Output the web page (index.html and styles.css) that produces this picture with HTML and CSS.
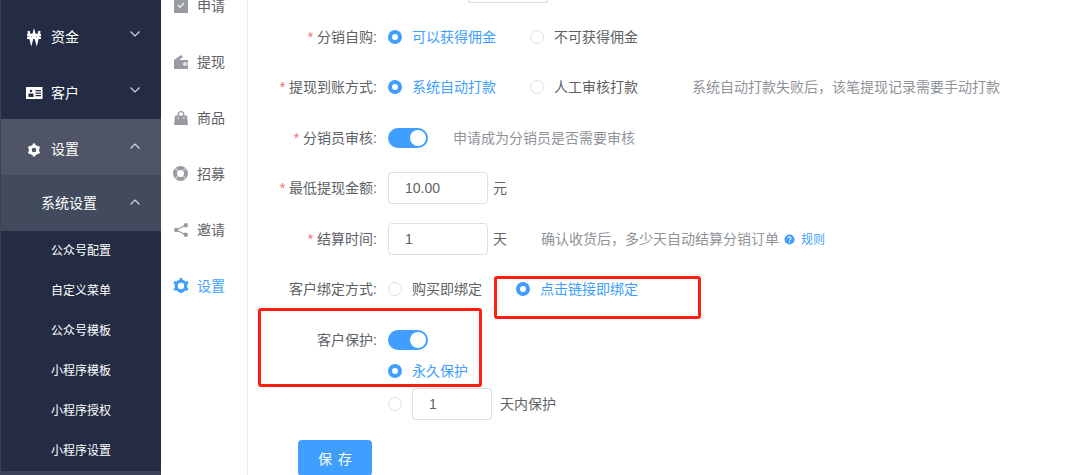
FILE: index.html
```html
<!DOCTYPE html>
<html lang="zh-CN">
<head>
    <meta charset="UTF-8" />
    <title>分销设置</title>
    <link rel="stylesheet" href="styles.css">
</head>
<body>
    <div class="page">
        <!-- Main dark menu -->
        <nav class="sidebar">
            <div class="menu-item">
                <svg class="menu-icon" viewBox="0 0 16 16"><path d="M2.500 3 5.300 14 8 4.500l2.700 9.500L13.500 3M1 6.800h14M1 9.800h14" fill="none" stroke="#fff" stroke-width="2.300"/></svg>
                <span class="menu-text">资金</span>
                <svg class="chevron" viewBox="0 0 10 6"><path d="M.5.5 5 5 9.500.500" fill="none" stroke="#d8dce6" stroke-width="1.100"/></svg>
            </div>
            <div class="menu-item">
                <svg class="menu-icon" viewBox="0 0 16 16"><path fill="#fff" fill-rule="evenodd" d="M0 3h16.500v12H0zM2.500 9.500V13h5V9.500zM3.700 7a1.300 1.300 0 1 0 2.600 0 1.300 1.300 0 1 0-2.600 0zM9.500 6v1.200H15V6zM9.500 8.500v1.200H15V8.500zM9.500 11v1.200H15V11z"/></svg>
                <span class="menu-text">客户</span>
                <svg class="chevron" viewBox="0 0 10 6"><path d="M.5.5 5 5 9.500.500" fill="none" stroke="#d8dce6" stroke-width="1.100"/></svg>
            </div>
            <div class="menu-item menu-open">
                <svg class="menu-icon" viewBox="0 0 16 16"><circle cx="8" cy="10" r="3.800" fill="none" stroke="#fff" stroke-width="3"/><path d="M8 3.600v12.800M2.500 6.800l11 6.400M13.500 6.800l-11 6.400" stroke="#fff" stroke-width="2.600" stroke-dasharray="2 8.800 2"/></svg>
                <span class="menu-text">设置</span>
                <svg class="chevron" viewBox="0 0 10 6"><path d="M.5 5.500 5 1l4.500 4.500" fill="none" stroke="#d8dce6" stroke-width="1.100"/></svg>
            </div>
            <div class="menu-item menu-sub">
                <span class="menu-text">系统设置</span>
                <svg class="chevron" viewBox="0 0 10 6"><path d="M.5 5.500 5 1l4.500 4.500" fill="none" stroke="#d8dce6" stroke-width="1.100"/></svg>
            </div>
            <div class="leaf">公众号配置</div>
            <div class="leaf">自定义菜单</div>
            <div class="leaf">公众号模板</div>
            <div class="leaf">小程序模板</div>
            <div class="leaf">小程序授权</div>
            <div class="leaf">小程序设置</div>
            <div class="leaf leaf-hover"></div>
        </nav>

        <!-- Second level menu -->
        <aside class="submenu">
            <div class="sub-item">
                <svg class="sub-icon" viewBox="0 0 16 16"><path fill="#999ba3" fill-rule="evenodd" d="M1 1h3V0h8v1h3v15H1zM4.500 8.500 7 11l4.500-4.500-.800-.800L7 9.400 5.300 7.700z"/></svg>
                <span>申请</span>
            </div>
            <div class="sub-item">
                <svg class="sub-icon" viewBox="0 0 16 16"><path fill="#999ba3" fill-rule="evenodd" d="M1 7 8 2l2.500 2.500H9L6.500 7H15v2.500h-3.500a1.500 1.500 0 0 0 0 3H15V16H1zM12 10.500h3v1h-3z"/></svg>
                <span>提现</span>
            </div>
            <div class="sub-item">
                <svg class="sub-icon" viewBox="0 0 16 16"><path fill="#999ba3" fill-rule="evenodd" d="M2 6.500h2.500V5.500a3.500 3.500 0 0 1 7 0v1H14L15 16H1zM5.800 6.500h4.400v-1a2.200 2.200 0 0 0-4.400 0zM4.500 8.500v1.200h1.200V8.500zM10.300 8.500v1.200h1.200V8.500z"/></svg>
                <span>商品</span>
            </div>
            <div class="sub-item">
                <svg class="sub-icon" viewBox="0 0 16 16"><circle cx="7.500" cy="8.500" r="5.500" fill="none" stroke="#999ba3" stroke-width="4"/><path d="M2.200 3.200l2.800 2.800M12.800 3.200 10 6M2.200 13.800 5 11M12.800 13.800 10 11" stroke="#c9cace" stroke-width="1.600"/></svg>
                <span>招募</span>
            </div>
            <div class="sub-item">
                <svg class="sub-icon" viewBox="0 0 16 16"><path d="M12.800 4.200 3 9l9.800 4.800" fill="none" stroke="#999ba3" stroke-width="1.200"/><circle cx="12.800" cy="4.200" r="2.200" fill="#999ba3"/><circle cx="3.200" cy="9" r="2.200" fill="#999ba3"/><circle cx="12.800" cy="13.800" r="2.200" fill="#999ba3"/></svg>
                <span>邀请</span>
            </div>
            <div class="sub-item sub-active">
                <svg class="sub-icon" viewBox="0 0 16 16"><g transform="translate(0 1)"><circle cx="8" cy="8" r="4.800" fill="none" stroke="#409eff" stroke-width="3.200"/><path d="M8 0v16M1 4l14 8M15 4 1 12" stroke="#409eff" stroke-width="2.600" stroke-dasharray="2.200 11.600 2.200"/></g></svg>
                <span>设置</span>
            </div>
        </aside>

        <!-- Settings form -->
        <main class="content">
            <div class="stub"></div>
            <div class="form-row">
                <label class="form-label"><i>*</i> 分销自购:</label>
                <span class="radio checked"><b></b>可以获得佣金</span>
                <span class="radio"><b></b>不可获得佣金</span>
            </div>
            <div class="form-row">
                <label class="form-label"><i>*</i> 提现到账方式:</label>
                <span class="radio checked"><b></b>系统自动打款</span>
                <span class="radio"><b></b>人工审核打款</span>
                <span class="hint hint-far">系统自动打款失败后，该笔提现记录需要手动打款</span>
            </div>
            <div class="form-row row-switch">
                <label class="form-label"><i>*</i> 分销员审核:</label>
                <span class="switch"></span>
                <span class="hint">申请成为分销员是否需要审核</span>
            </div>
            <div class="form-row">
                <label class="form-label"><i>*</i> 最低提现金额:</label>
                <span class="input">10.00</span>
                <span class="unit">元</span>
            </div>
            <div class="form-row row-switch">
                <label class="form-label"><i>*</i> 结算时间:</label>
                <span class="input">1</span>
                <span class="unit">天</span>
                <span class="hint hint-mid">确认收货后，多少天自动结算分销订单</span>
                <svg class="help" viewBox="0 0 12 12"><circle cx="6" cy="6" r="5.500" fill="#409eff"/><path d="M4.300 4.700a1.700 1.600 0 1 1 2.600 1.400c-.6.400-.9.600-.9 1.200" fill="none" stroke="#fff" stroke-width="1.100"/><circle cx="6" cy="9" r=".7" fill="#fff"/></svg>
                <span class="link">规则</span>
            </div>
            <div class="form-row">
                <label class="form-label">客户绑定方式:</label>
                <span class="radio"><b></b>购买即绑定</span>
                <span class="radio checked"><b></b>点击链接即绑定</span>
            </div>
            <div class="form-row row-switch">
                <label class="form-label">客户保护:</label>
                <span class="switch"></span>
            </div>
            <div class="form-row row-tight row-forever">
                <span class="radio checked"><b></b>永久保护</span>
            </div>
            <div class="form-row row-tight row-days">
                <span class="radio radio-input"><b></b></span>
                <span class="input input-small">1</span>
                <span class="unit unit-wide">天内保护</span>
            </div>
            <button class="save-btn">保 存</button>
        </main>

        <!-- Red annotation boxes drawn over the screenshot -->
        <div class="mark mark-bind"></div>
        <div class="mark mark-protect"></div>
    </div>
</body>
</html>
```

FILE: styles.css
```css
html, body {
    margin: 0;
    height: 100%;
    overflow: hidden;
}
body {
    font-family: "Liberation Sans", "Noto Sans CJK SC", sans-serif;
    font-size: 14px;
    color: #606266;
    background-color: #ffffff;
}
.page {
    position: relative;
    display: flex;
    width: 1081px;
    height: 475px;
    overflow: hidden;
}
.sidebar {
    width: 160px;
    flex-shrink: 0;
    padding-top: 7px;
    border-left: 1px solid #3a4257;
    background-color: #232c43;
    color: #ffffff;
}
.menu-item {
    display: flex;
    align-items: center;
    height: 56px;
    padding-left: 25px;
    position: relative;
}
.menu-open {
    background-color: #4f5567;
}
.menu-sub {
    padding-left: 40px;
    background-color: #424a5d;
}
.menu-icon {
    width: 16px;
    height: 16px;
    margin-right: 9px;
    margin-top: 2px;
    overflow: visible;
}
.menu-text {
    position: relative;
    top: 1px;
}
.menu-sub .menu-text {
    top: -1px;
}
.chevron {
    position: absolute;
    left: 129px;
    top: 24px;
    width: 10px;
    height: 6px;
}
.leaf {
    height: 40px;
    line-height: 40px;
    padding-left: 50px;
    font-size: 12px;
}
.leaf-hover {
    background-color: #3a4257;
}
.submenu {
    width: 86px;
    flex-shrink: 0;
    border-right: 1px solid #e8e9ee;
    margin-top: -23px;
}
.sub-item {
    display: flex;
    align-items: center;
    height: 56px;
    padding-left: 12px;
}
.sub-icon {
    width: 16px;
    height: 16px;
    margin-right: 8px;
}
.sub-active {
    color: #409eff;
}
.content {
    flex: 1;
    padding-left: 10px;
}
.stub {
    width: 80px;
    height: 3px;
    margin-left: 210px;
    border: 1px solid #dcdfe6;
    border-top: none;
    border-radius: 0 0 4px 4px;
    box-sizing: border-box;
}
.form-row {
    display: flex;
    align-items: center;
    height: 36px;
    margin-top: 14px;
}
.form-row:nth-child(2) {
    margin-top: 16px;
}
.row-switch {
    margin-top: 15px;
}
.row-tight {
    padding-left: 130px;
}
.row-forever {
    margin-top: -5px;
}
.row-days {
    margin-top: -3px;
}
/* texts sit a pixel above the controls next to them */
.form-label, .radio, .hint, .unit, .link {
    margin-bottom: 2px;
}
.form-label {
    width: 119px;
    margin-right: 11px;
    text-align: right;
    white-space: nowrap;
}
.form-label i {
    color: #f56c6c;
    font-style: normal;
}
.radio {
    display: inline-flex;
    align-items: center;
    margin-right: 34px;
}
.radio b {
    position: relative;
    top: 1px;
    width: 14px;
    height: 14px;
    margin-right: 10px;
    box-sizing: border-box;
    border: 1px solid #dcdfe6;
    border-radius: 50%;
    background-color: #ffffff;
}
.radio.checked {
    color: #409eff;
}
.radio.checked b {
    border: 4.500px solid #409eff;
}
.radio-input {
    margin-right: 0;
}
.switch {
    position: relative;
    width: 40px;
    height: 20px;
    border-radius: 10px;
    background-color: #409eff;
}
.switch::after {
    content: "";
    position: absolute;
    top: 2px;
    right: 2px;
    width: 16px;
    height: 16px;
    border-radius: 50%;
    background-color: #ffffff;
}
.hint {
    margin-left: 25px;
    color: #909399;
}
.hint-far {
    margin-left: 20px;
}
.hint-mid {
    margin-left: 34px;
}
.input {
    width: 100px;
    height: 32px;
    line-height: 30px;
    padding-left: 16px;
    box-sizing: border-box;
    border: 1px solid #dcdfe6;
    border-radius: 4px;
}
.input-small {
    width: 80px;
}
.unit {
    margin-left: 5px;
}
.unit-wide {
    margin-left: 8px;
}
.help {
    width: 11px;
    height: 11px;
    margin: 0 6px 0 5px;
}
.link {
    font-size: 12px;
    color: #409eff;
}
.save-btn {
    display: block;
    width: 74px;
    height: 36px;
    margin: 18px 0 0 40px;
    border: none;
    border-radius: 4px;
    background-color: #409eff;
    color: #ffffff;
    font-family: inherit;
    font-size: 14px;
    word-spacing: 2px;
}
.mark {
    position: absolute;
    box-sizing: border-box;
    border: 3px solid #ff1e10;
    border-radius: 3px;
}
.mark-bind {
    left: 494px;
    top: 276px;
    width: 207px;
    height: 43px;
}
.mark-protect {
    left: 258px;
    top: 308px;
    width: 224px;
    height: 79px;
}
```
